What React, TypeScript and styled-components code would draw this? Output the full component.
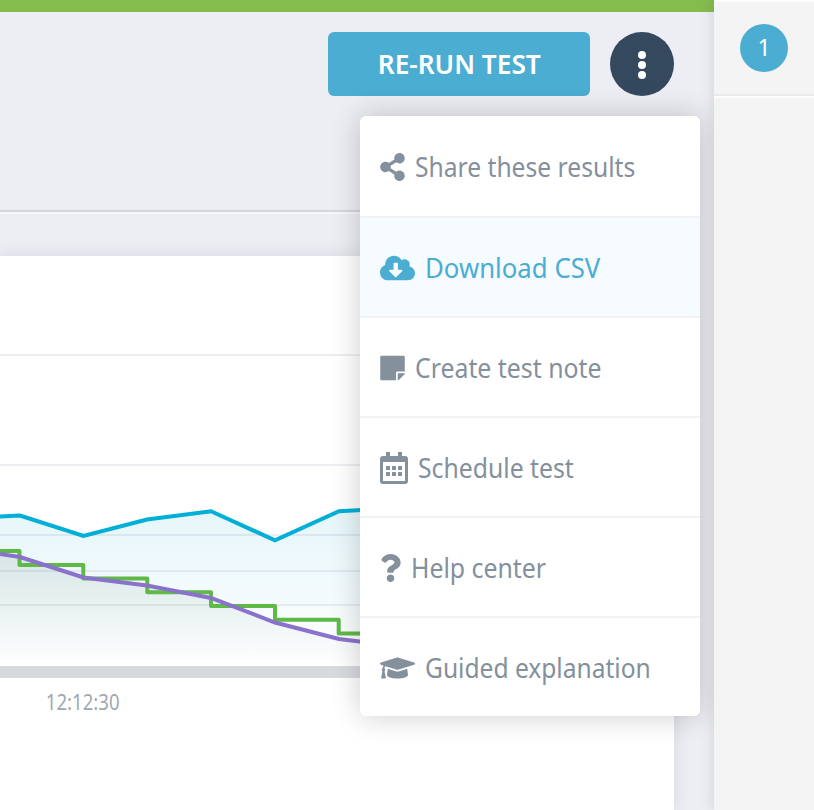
import React from 'react';
import styled, { createGlobalStyle, css } from 'styled-components';
import {
  FaShareAlt,
  FaCloudDownloadAlt,
  FaStickyNote,
  FaQuestion,
  FaGraduationCap,
} from 'react-icons/fa';

const GlobalStyle = createGlobalStyle`
  *, *::before, *::after { box-sizing: border-box; }
  body {
    margin: 0;
    overflow: hidden;
    font-family: "Noto Sans", "Open Sans", sans-serif;
  }
`;

const Page = styled.div`
  display: grid;
  grid-template-columns: 714px 100px;
  height: 810px;
  overflow: hidden;
  background: #edeef3;
`;

const Main = styled.main`
  display: flex;
  flex-direction: column;
  min-width: 0;
`;

const StatusBar = styled.div`
  height: 12px;
  flex: none;
  background: #84bc4e;
`;

const Header = styled.header`
  width: 674px;
  height: 202px;
  flex: none;
  display: flex;
  justify-content: flex-end;
  align-items: flex-start;
  gap: 20px;
  padding-top: 20px;
  border-bottom: 2px solid #f6f7f8;
  box-shadow: inset 0 -2px 0 #d3d6da;
`;

const RunButton = styled.button`
  width: 262px;
  height: 64px;
  padding: 0;
  border: 0;
  border-radius: 6px;
  background: #4badd1;
  color: #fff;
  font: 600 26.5px/64px "Noto Sans", sans-serif;
`;

const MenuAnchor = styled.div`
  position: relative;
`;

const MoreButton = styled.button`
  display: flex;
  flex-direction: column;
  align-items: center;
  justify-content: center;
  gap: 2px;
  width: 64px;
  height: 64px;
  padding: 2px 0 0;
  border: 0;
  border-radius: 50%;
  background: #34495e;
`;

const Dot = styled.span`
  width: 8px;
  height: 8px;
  border-radius: 50%;
  background: #fff;
`;

const Menu = styled.ul`
  position: absolute;
  z-index: 1;
  top: 84px;
  right: -26px;
  width: 340px;
  margin: 0;
  padding: 0;
  list-style: none;
  border-radius: 6px;
  background: #fff;
  box-shadow: 0 0 30px rgba(0, 0, 0, 0.2);
`;

const MenuItem = styled.li<{ $active?: boolean }>`
  display: flex;
  align-items: center;
  gap: 10px;
  height: 100px;
  padding-left: 20px;
  color: #84909c;

  & + & {
    border-top: 2px solid #f1f2f4;
  }

  ${(p) =>
    p.$active &&
    css`
      background: #f5fbfe;
      color: #4badd1;
    `}
`;

const IconBox = styled.span<{ $width: number; $height?: number }>`
  display: flex;
  flex: none;
  width: ${(p) => p.$width}px;
  padding-top: ${(p) => (p.$height ? 2 : 1)}px;

  svg {
    display: block;
    width: 100%;
    height: ${(p) => p.$height ?? 28}px;
  }
`;

const Condensed = styled.span<{ $scale: number; $origin?: string }>`
  display: inline-block;
  white-space: nowrap;
  transform: scaleX(${(p) => p.$scale});
  transform-origin: ${(p) => p.$origin ?? 'left'} center;
`;

const Label = styled(Condensed)`
  padding-top: 2px;
  font-size: 27px;
  line-height: 36px;
`;

const Card = styled.section`
  flex: 1;
  width: 674px;
  margin-top: 42px;
  background: #fff;
  box-shadow: 0 0 16px rgba(60, 60, 90, 0.12);
`;

const Plot = styled.svg`
  display: block;
`;

const Axis = styled.div`
  height: 12px;
  background: #d9dade;
`;

const TimeLabel = styled.div`
  width: 166px;
  padding-top: 10px;
  text-align: center;
  color: #a0a8af;
  font-size: 21px;
  line-height: 28px;
`;

const Sidebar = styled.aside`
  position: relative;
  z-index: 2;
  background: #f4f4f4;
  box-shadow: 0 0 14px rgba(0, 0, 0, 0.12);
  clip-path: inset(0 0 0 -14px);
`;

const SidebarCell = styled.div`
  display: flex;
  align-items: center;
  justify-content: center;
  height: 98px;
  padding-bottom: 2px;
  border-top: 2px solid #fcfcfc;
  border-bottom: 2px solid #fdfdfd;
  box-shadow: inset 0 -2px 0 #eaeaea;
`;

const Badge = styled.span`
  width: 48px;
  height: 48px;
  border-radius: 50%;
  background: #4badd1;
  color: #fff;
  text-align: center;
  font-size: 23px;
  line-height: 47px;
`;

const CalendarIcon = () => (
  <svg viewBox="0 0 28 32" fill="currentColor">
    <path
      fillRule="evenodd"
      d="M6 0h4v4h8V0h4v4h3a3 3 0 0 1 3 3v22a3 3 0 0 1-3 3H3a3 3 0 0 1-3-3V7a3 3 0 0 1 3-3h3ZM3 10v19h22V10Z"
    />
    {[14, 20].map((y) =>
      [6, 12, 18].map((x) => (
        <rect key={`${x}-${y}`} x={x} y={y} width="4" height="4" rx="0.6" />
      )),
    )}
  </svg>
);

const items = [
  { icon: <FaShareAlt />, width: 25, text: 'Share these results', scale: 0.912 },
  { icon: <FaCloudDownloadAlt />, width: 35, text: 'Download CSV', scale: 0.955, active: true },
  { icon: <FaStickyNote />, width: 25, text: 'Create test note', scale: 0.92 },
  { icon: <CalendarIcon />, width: 28, height: 32, text: 'Schedule test', scale: 0.917 },
  { icon: <FaQuestion />, width: 21, text: 'Help center', scale: 0.92 },
  { icon: <FaGraduationCap />, width: 35, text: 'Guided explanation', scale: 0.91 },
];

const BLUE = '0,516.5 20,515.5 83.5,536 147,519.5 211,511.3 275,540.3 339,511.3 380,509';
const PURPLE = '0,554 20,557 83.5,577.5 147,585.5 211,598 275,622.5 339,639 380,644';
const GREEN =
  'M0 551H19.5V565H83.3V578.5H147.3V592.2H211V606H275V619.8H338.7V633.5H380';

const ResultsPlot = () => (
  <Plot width="674" height="410" viewBox="0 256 674 410" fill="none">
    <defs>
      <linearGradient id="blueArea" gradientUnits="userSpaceOnUse" x1="0" y1="510" x2="0" y2="666">
        <stop offset="0" stopColor="#00a5c8" stopOpacity="0.1" />
        <stop offset="1" stopColor="#00a5c8" stopOpacity="0" />
      </linearGradient>
      <linearGradient id="purpleArea" gradientUnits="userSpaceOnUse" x1="0" y1="550" x2="0" y2="666">
        <stop offset="0" stopColor="#5b7d6b" stopOpacity="0.15" />
        <stop offset="1" stopColor="#5b7d6b" stopOpacity="0" />
      </linearGradient>
    </defs>
    {[355, 465, 535, 571, 605].map((y) => (
      <path key={y} d={`M0 ${y}H674`} stroke="#edeef2" strokeWidth="2" />
    ))}
    <polygon points={`0,666 ${BLUE} 380,666`} fill="url(#blueArea)" />
    <polygon points={`0,666 ${PURPLE} 380,666`} fill="url(#purpleArea)" />
    <polyline points={BLUE} stroke="#00afd7" strokeWidth="4" />
    <path d={GREEN} stroke="#5eb947" strokeWidth="4" strokeLinejoin="round" />
    <polyline points={PURPLE} stroke="#8a72cc" strokeWidth="4" />
  </Plot>
);

export default function App() {
  return (
    <>
      <GlobalStyle />
      <Page>
        <Main>
          <StatusBar />
          <Header>
            <RunButton>
              <Condensed $scale={0.99} $origin="center">RE-RUN TEST</Condensed>
            </RunButton>
            <MenuAnchor>
              <MoreButton aria-label="More actions">
                <Dot />
                <Dot />
                <Dot />
              </MoreButton>
              <Menu>
                {items.map((item) => (
                  <MenuItem key={item.text} $active={item.active}>
                    <IconBox $width={item.width} $height={item.height}>
                      {item.icon}
                    </IconBox>
                    <Label $scale={item.scale}>{item.text}</Label>
                  </MenuItem>
                ))}
              </Menu>
            </MenuAnchor>
          </Header>
          <Card>
            <ResultsPlot />
            <Axis />
            <TimeLabel>
              <Condensed $scale={0.885} $origin="center">12:12:30</Condensed>
            </TimeLabel>
          </Card>
        </Main>
        <Sidebar>
          <SidebarCell>
            <Badge>1</Badge>
          </SidebarCell>
        </Sidebar>
      </Page>
    </>
  );
}
